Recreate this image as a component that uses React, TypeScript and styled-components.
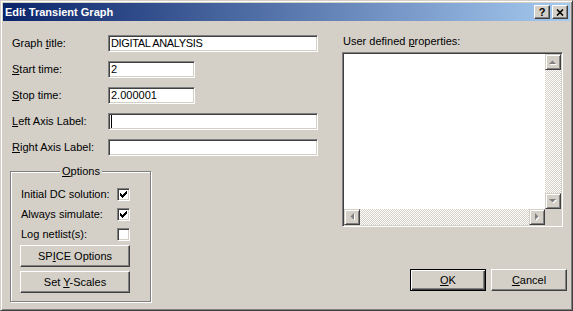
import React from 'react';
import styled, { createGlobalStyle } from 'styled-components';

const FACE = '#D4D0C8';
const SHADOW = '#808080';
const DARK = '#404040';
const LIGHT = '#FFFFFF';

const GlobalStyle = createGlobalStyle`
  html, body { margin: 0; padding: 0; background: ${FACE}; }
  body {
    font-family: "Liberation Sans", Arial, sans-serif;
    font-size: 11px;
    color: #000;
  }
  * { box-sizing: border-box; }
`;

const Window = styled.div`
  width: 573px;
  height: 311px;
  background: ${FACE};
  border: 1px solid;
  border-color: ${FACE} ${DARK} ${DARK} ${FACE};
  box-shadow: inset 1px 1px 0 ${LIGHT}, inset -1px -1px 0 ${SHADOW};
  padding: 2px;
  display: flex;
  flex-direction: column;
`;

const TitleBar = styled.div`
  height: 18px;
  flex: none;
  display: flex;
  align-items: center;
  padding: 0 2px;
  background: linear-gradient(to right, #0a246a, #a6caf0);
  color: #fff;
`;

const TitleText = styled.div`
  flex: 1;
  font-weight: bold;
  font-size: 11px;
  line-height: 13px;
  white-space: nowrap;
`;

const CaptionButtons = styled.div`
  display: flex;
  gap: 2px;
`;

const CaptionButton = styled.div`
  width: 16px;
  height: 14px;
  background: ${FACE};
  border: 1px solid;
  border-color: ${LIGHT} ${DARK} ${DARK} ${LIGHT};
  box-shadow: inset -1px -1px 0 ${SHADOW};
  display: flex;
  align-items: center;
  justify-content: center;
  color: #000;
  font-weight: bold;
  font-size: 11px;
  line-height: 11px;
`;

const Client = styled.div`
  flex: 1;
  display: flex;
`;

const LeftPane = styled.div`
  width: 339px;
  flex: none;
  padding: 14px 0 0 7px;
  display: flex;
  flex-direction: column;
`;

const FormGrid = styled.div`
  display: grid;
  grid-template-columns: 96px auto;
  grid-auto-rows: 17px;
  row-gap: 9px;
  align-items: center;
  padding-left: 2px;
`;

const Label = styled.div`
  line-height: 13px;
  white-space: nowrap;
`;

const Mn = styled.span`
  text-decoration: underline;
  text-underline-offset: 1px;
`;

const Edit = styled.div<{ $w: number; $tight?: boolean }>`
  width: ${(p) => p.$w}px;
  height: 17px;
  background: #fff;
  border: 1px solid;
  border-color: ${SHADOW} ${LIGHT} ${LIGHT} ${SHADOW};
  box-shadow: inset 1px 1px 0 ${DARK}, inset -1px -1px 0 ${FACE};
  padding: 0 2px;
  display: flex;
  align-items: center;
  line-height: 13px;
  white-space: pre;
  overflow: hidden;
  letter-spacing: ${(p) => (p.$tight ? '-0.35px' : '0')};
`;

const Caret = styled.span`
  width: 1px;
  height: 13px;
  background: #000;
`;

const GroupBox = styled.div`
  margin-top: 15px;
  width: 141px;
  height: 131px;
  border: 1px solid ${SHADOW};
  box-shadow: 1px 1px 0 ${LIGHT}, inset 1px 1px 0 ${LIGHT};
  padding-left: 9px;
  display: flex;
  flex-direction: column;
`;

const GroupCaption = styled.div`
  width: fit-content;
  margin: -7px auto 0;
  padding: 0 2px;
  background: ${FACE};
  line-height: 13px;
  position: relative;
  left: -4px;
`;

const CheckRows = styled.div`
  margin-top: 6px;
  display: flex;
  flex-direction: column;
`;

const CheckRow = styled.div`
  height: 20px;
  display: grid;
  grid-template-columns: 96px 13px;
  align-items: center;
  padding-left: 1px;
  line-height: 13px;
`;

const CheckBox = styled.div`
  width: 13px;
  height: 13px;
  background: #fff;
  border: 1px solid;
  border-color: ${SHADOW} ${LIGHT} ${LIGHT} ${SHADOW};
  box-shadow: inset 1px 1px 0 ${DARK}, inset -1px -1px 0 ${FACE};
  display: flex;
  align-items: center;
  justify-content: center;
`;

const GroupButtons = styled.div`
  margin-top: 1px;
  display: flex;
  flex-direction: column;
  gap: 4px;
`;

const PushButton = styled.div<{ $w: number; $default?: boolean }>`
  width: ${(p) => p.$w}px;
  height: 22px;
  background: ${FACE};
  display: flex;
  align-items: center;
  justify-content: center;
  line-height: 13px;
  border: 1px solid;
  border-color: ${(p) =>
    p.$default ? '#000' : `${LIGHT} ${DARK} ${DARK} ${LIGHT}`};
  box-shadow: ${(p) =>
    p.$default
      ? `inset 1px 1px 0 ${LIGHT}, inset -1px -1px 0 ${DARK}, inset -2px -2px 0 ${SHADOW}`
      : `inset -1px -1px 0 ${SHADOW}`};
`;

const ButtonText = styled.span`
  white-space: pre;
`;

const RightPane = styled.div`
  flex: 1;
  display: flex;
  flex-direction: column;
  padding-top: 14px;
`;

const PaneLabel = styled.div`
  line-height: 13px;
  padding-left: 1px;
  white-space: nowrap;
`;

const ListBox = styled.div`
  margin-top: 4px;
  width: 221px;
  height: 175px;
  border: 1px solid;
  border-color: ${SHADOW} ${LIGHT} ${LIGHT} ${SHADOW};
  box-shadow: inset 1px 1px 0 ${DARK}, inset -1px -1px 0 ${FACE};
  padding: 1px;
  display: grid;
  grid-template-columns: 1fr 16px;
  grid-template-rows: 1fr 16px;
`;

const ListArea = styled.div`
  background: #fff;
`;

const ScrollBarV = styled.div`
  display: flex;
  flex-direction: column;
`;

const ScrollBarH = styled.div`
  display: flex;
`;

const Track = styled.div`
  flex: 1;
  background: repeating-conic-gradient(${LIGHT} 0% 25%, ${FACE} 0% 50%) 0 0 / 2px 2px;
`;

const ScrollButton = styled.div`
  width: 16px;
  height: 16px;
  flex: none;
  background: ${FACE};
  border: 1px solid;
  border-color: ${FACE} ${DARK} ${DARK} ${FACE};
  box-shadow: inset 1px 1px 0 ${LIGHT}, inset -1px -1px 0 ${SHADOW};
  display: flex;
  align-items: center;
  justify-content: center;
`;

const Corner = styled.div`
  background: ${FACE};
`;

const DialogButtons = styled.div`
  margin-top: auto;
  display: flex;
  justify-content: flex-end;
  gap: 5px;
  padding: 0 3px 17px 0;
`;

type Dir = 'up' | 'down' | 'left' | 'right';

const arrowPoints: Record<Dir, string> = {
  up: '0,4 3.5,0.5 7,4',
  down: '0,0 7,0 3.5,3.5',
  left: '4,0 4,7 0.5,3.5',
  right: '0,0 0,7 3.5,3.5',
};

const Arrow: React.FC<{ dir: Dir }> = ({ dir }) => {
  const horizontal = dir === 'left' || dir === 'right';
  const w = horizontal ? 5 : 8;
  const h = horizontal ? 8 : 5;
  return (
    <svg width={w} height={h} viewBox={`0 0 ${w} ${h}`}>
      <polygon points={arrowPoints[dir]} fill="#fff" transform="translate(1 1)" />
      <polygon points={arrowPoints[dir]} fill={SHADOW} />
    </svg>
  );
};

const Check: React.FC = () => (
  <svg width="7" height="7" viewBox="0 0 7 7" shapeRendering="crispEdges">
    <polygon points="0,2 2,4 6,0 7,0 7,3 2,7 0,5" fill="#000" />
  </svg>
);

const CloseGlyph: React.FC = () => (
  <svg width="8" height="7" viewBox="0 0 8 7">
    <path d="M1 0.5 L7 6.5 M7 0.5 L1 6.5" stroke="#000" strokeWidth="1.6" />
  </svg>
);

const App: React.FC = () => (
  <>
    <GlobalStyle />
    <Window>
      <TitleBar>
        <TitleText>Edit Transient Graph</TitleText>
        <CaptionButtons>
          <CaptionButton>?</CaptionButton>
          <CaptionButton>
            <CloseGlyph />
          </CaptionButton>
        </CaptionButtons>
      </TitleBar>
      <Client>
        <LeftPane>
          <FormGrid>
            <Label>
              Graph <Mn>t</Mn>itle:
            </Label>
            <Edit $w={210} $tight>
              DIGITAL ANALYSIS
            </Edit>
            <Label>
              <Mn>S</Mn>tart time:
            </Label>
            <Edit $w={87}>2</Edit>
            <Label>
              <Mn>S</Mn>top time:
            </Label>
            <Edit $w={87}>2.000001</Edit>
            <Label>
              <Mn>L</Mn>eft Axis Label:
            </Label>
            <Edit $w={210}>
              <Caret />
            </Edit>
            <Label>
              <Mn>R</Mn>ight Axis Label:
            </Label>
            <Edit $w={210} />
          </FormGrid>
          <GroupBox>
            <GroupCaption>
              <Mn>O</Mn>ptions
            </GroupCaption>
            <CheckRows>
              <CheckRow>
                <span>Initial DC solution:</span>
                <CheckBox>
                  <Check />
                </CheckBox>
              </CheckRow>
              <CheckRow>
                <span>Always simulate:</span>
                <CheckBox>
                  <Check />
                </CheckBox>
              </CheckRow>
              <CheckRow>
                <span>Log netlist(s):</span>
                <CheckBox />
              </CheckRow>
            </CheckRows>
            <GroupButtons>
              <PushButton $w={110}>
                <ButtonText>
                  SP<Mn>I</Mn>CE Options
                </ButtonText>
              </PushButton>
              <PushButton $w={110}>
                <ButtonText>
                  Set <Mn>Y</Mn>-Scales
                </ButtonText>
              </PushButton>
            </GroupButtons>
          </GroupBox>
        </LeftPane>
        <RightPane>
          <PaneLabel>
            User defined <Mn>p</Mn>roperties:
          </PaneLabel>
          <ListBox>
            <ListArea />
            <ScrollBarV>
              <ScrollButton>
                <Arrow dir="up" />
              </ScrollButton>
              <Track />
              <ScrollButton>
                <Arrow dir="down" />
              </ScrollButton>
            </ScrollBarV>
            <ScrollBarH>
              <ScrollButton>
                <Arrow dir="left" />
              </ScrollButton>
              <Track />
              <ScrollButton>
                <Arrow dir="right" />
              </ScrollButton>
            </ScrollBarH>
            <Corner />
          </ListBox>
          <DialogButtons>
            <PushButton $w={76} $default>
              <ButtonText>
                <Mn>O</Mn>K
              </ButtonText>
            </PushButton>
            <PushButton $w={76}>
              <ButtonText>
                <Mn>C</Mn>ancel
              </ButtonText>
            </PushButton>
          </DialogButtons>
        </RightPane>
      </Client>
    </Window>
  </>
);

export default App;
